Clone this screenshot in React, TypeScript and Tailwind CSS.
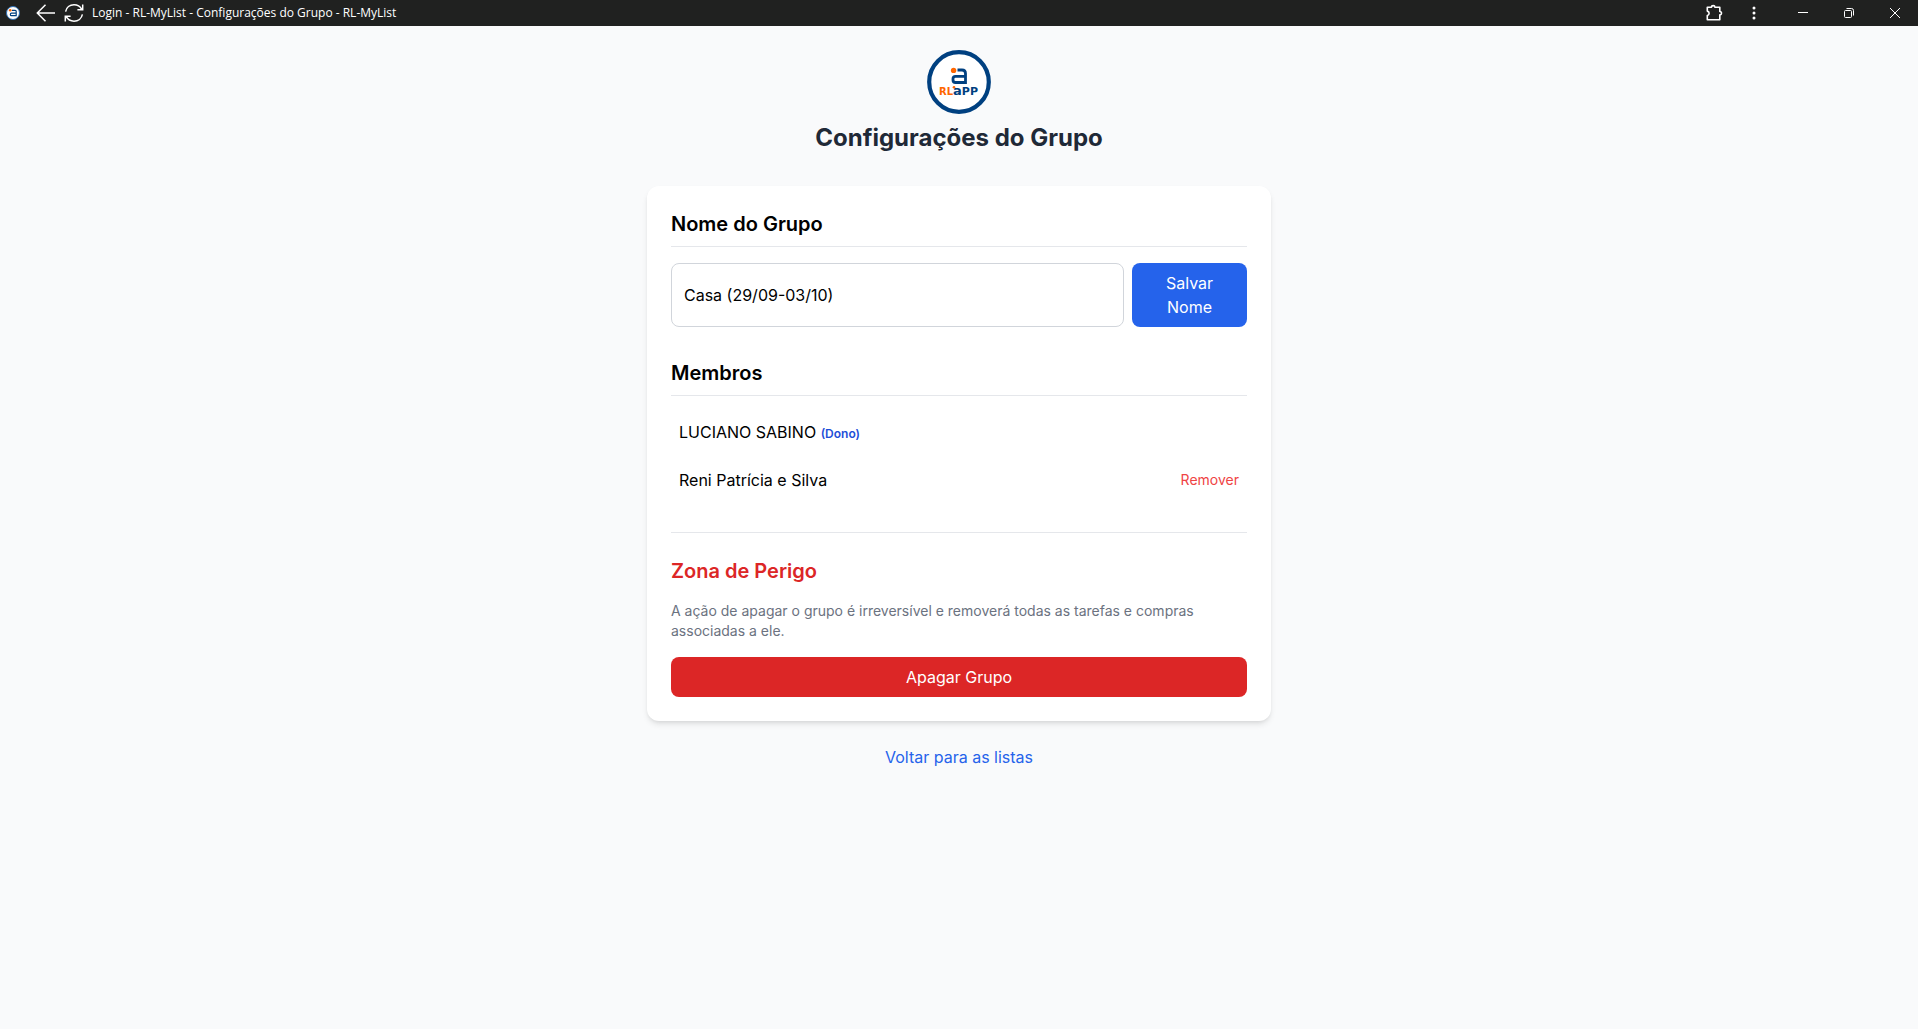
import React, { useState } from 'react';

interface Member {
  id: number;
  name: string;
  owner: boolean;
}

const members: Member[] = [
  { id: 1, name: 'LUCIANO SABINO', owner: true },
  { id: 2, name: 'Reni Patrícia e Silva', owner: false },
];

const AppIcon: React.FC = () => (
  <svg className="w-[14px] h-[14px] mr-4" viewBox="0 0 14 14" fill="none" aria-hidden="true">
    <circle cx="7" cy="7" r="6.5" fill="#fff" stroke="#2f6fb3" strokeWidth="1" />
    <path d="M6 4.3h3.2q1 0 1 1v4.4H5.4q-1 0-1-1v-.5q0-1 1-1h4.800" stroke="#004080" strokeWidth="1.2" />
    <circle cx="4.2" cy="4.2" r="1.3" fill="#f60" />
  </svg>
);

const TitleBar: React.FC = () => (
  <div className="flex items-center justify-between h-[26px] bg-[#202120] text-white pl-1.5">
    <div className="flex items-center">
      <AppIcon />
      <button type="button" aria-label="Voltar" className="mr-2">
        <svg className="w-5 h-5" viewBox="0 0 20 20" fill="none" stroke="currentColor" strokeWidth="1.5">
          <path d="M19 10H1.5M9.5 1.8L1.3 10l8.2 8.2" />
        </svg>
      </button>
      <button type="button" aria-label="Recarregar">
        <svg className="w-5 h-5" viewBox="0 0 20 20" fill="none" stroke="currentColor" strokeWidth="1.5">
          <path d="M1.6 8.6C2.4 4.6 5.8 1.8 10 1.8c3.4 0 6.2 1.7 7.7 4.5M18.7 1.5v5.3h-5.3" />
          <path d="M18.4 11.4c-.8 4-4.2 6.8-8.4 6.8-3.4 0-6.2-1.7-7.7-4.5M1.3 18.5v-5.3h5.3" />
        </svg>
      </button>
      <span className="ml-2 text-xs font-['Open_Sans',sans-serif]">
        Login - RL-MyList - Configurações do Grupo - RL-MyList
      </span>
    </div>
    <div className="flex items-center">
      <button type="button" aria-label="Extensões" className="w-10 flex justify-center">
        <svg className="w-[18px] h-[18px]" viewBox="0 0 18 18" fill="none" stroke="currentColor" strokeWidth="1.6" strokeLinejoin="round">
          <path d="M2.3 3.3h4.2a1.7 1.7 0 0 1 3.4 0h4.9v4.2a1.7 1.7 0 0 1 0 3.4v4.8H2.3v-4.1a2.3 2.3 0 0 0 0-4.5z" />
        </svg>
      </button>
      <button type="button" aria-label="Mais opções" className="w-10 mr-1.5 flex justify-center">
        <svg className="w-4 h-4" viewBox="0 0 16 16" fill="currentColor">
          <circle cx="8" cy="3" r="1.5" />
          <circle cx="8" cy="8" r="1.5" />
          <circle cx="8" cy="13" r="1.5" />
        </svg>
      </button>
      <button type="button" aria-label="Minimizar" className="w-[46px] flex justify-center">
        <svg className="w-3 h-3" viewBox="0 0 12 12" stroke="currentColor">
          <path d="M1 5.5h10" />
        </svg>
      </button>
      <button type="button" aria-label="Restaurar" className="w-[46px] flex justify-center">
        <svg className="w-3 h-3" viewBox="0 0 12 12" fill="none" stroke="currentColor">
          <rect x="1.5" y="3.5" width="7" height="7" rx="1" />
          <path d="M3.5 1.5h5a2 2 0 0 1 2 2v5" />
        </svg>
      </button>
      <button type="button" aria-label="Fechar" className="w-[46px] flex justify-center">
        <svg className="w-3 h-3" viewBox="0 0 12 12" stroke="currentColor">
          <path d="M1 1l10 10M11 1L1 11" />
        </svg>
      </button>
    </div>
  </div>
);

const Logo: React.FC = () => (
  <svg className="w-16 h-16 mx-auto mb-2" viewBox="0 0 64 64" fill="none" role="img" aria-label="RL App">
    <circle cx="32" cy="32" r="29.8" fill="#fff" stroke="#004080" strokeWidth="4.2" />
    <path
      d="M30.5 20H35q3.500 0 3.500 3.500V32.500H28.500q-2.500 0-2.500-2.500v-1.200q0-2.500 2.500-2.500h10"
      stroke="#004080"
      strokeWidth="2.8"
    />
    <circle cx="26.6" cy="20.4" r="2.7" fill="#f60" />
    <text x="12" y="45" fontSize="10" className="font-['DejaVu_Sans',sans-serif] font-bold">
      <tspan fill="#f60">RL</tspan>
      <tspan fill="#004080" fontSize="13">a</tspan>
      <tspan fill="#004080" fontSize="11">PP</tspan>
    </text>
    <circle cx="27" cy="37.3" r="1.3" fill="#f60" />
  </svg>
);

const App: React.FC = () => {
  const [groupName, setGroupName] = useState('Casa (29/09-03/10)');

  return (
    <div className="min-h-screen bg-[#f9fafb] text-black font-['Inter',sans-serif]">
      <TitleBar />
      <main className="max-w-2xl mx-auto p-6">
        <header className="text-center mb-8">
          <Logo />
          <h1 className="text-2xl font-bold text-[#1f2937]">Configurações do Grupo</h1>
        </header>

        <div className="bg-white p-6 rounded-xl shadow-md">
          {/* Group name */}
          <section className="mb-8">
            <h2 className="text-xl font-semibold border-b border-[#e5e7eb] pb-2 mb-4">
              <label htmlFor="group-name">Nome do Grupo</label>
            </h2>
            <form className="flex gap-2" onSubmit={(e) => e.preventDefault()}>
              <input
                id="group-name"
                type="text"
                value={groupName}
                onChange={(e) => setGroupName(e.target.value)}
                className="w-full p-3 border border-[#d1d5db] rounded-lg"
              />
              <button type="submit" className="bg-[#2563eb] text-white py-2 px-5 rounded-lg">
                Salvar Nome
              </button>
            </form>
          </section>

          {/* Members */}
          <section>
            <h2 className="text-xl font-semibold border-b border-[#e5e7eb] pb-2 mb-4">Membros</h2>
            <ul className="space-y-2">
              {members.map((member) => (
                <li key={member.id} className="flex items-center justify-between p-2">
                  <span>
                    {member.name}{' '}
                    {member.owner && <span className="text-xs font-semibold text-[#1d4ed8]">(Dono)</span>}
                  </span>
                  {!member.owner && (
                    <button type="button" className="text-sm text-[#ef4444]">
                      Remover
                    </button>
                  )}
                </li>
              ))}
            </ul>
          </section>

          {/* Danger zone */}
          <section className="mt-8 pt-6 border-t border-[#e5e7eb]">
            <h2 className="text-xl font-semibold text-[#dc2626] mb-4">Zona de Perigo</h2>
            <p className="text-sm text-[#6b7280] mb-4">
              A ação de apagar o grupo é irreversível e removerá todas as tarefas e compras associadas a ele.
            </p>
            <button type="button" className="w-full bg-[#dc2626] text-white py-2 px-4 rounded-lg">
              Apagar Grupo
            </button>
          </section>
        </div>

        <div className="text-center mt-6">
          <a href="#listas" className="text-[#2563eb]">
            Voltar para as listas
          </a>
        </div>
      </main>
    </div>
  );
};

export default App;
